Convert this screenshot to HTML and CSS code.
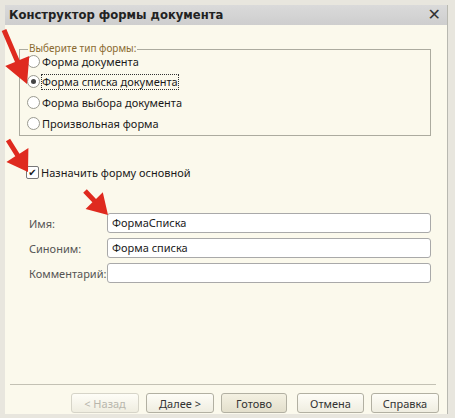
FILE: index.html
```html
<!DOCTYPE html>
<html lang="ru">
<head>
  <meta charset="UTF-8" />
  <title>Конструктор формы документа</title>
  <link rel="stylesheet" href="styles.css">
</head>
<body>
  <div class="window">
    <div class="titlebar">
      <span class="title">Конструктор формы документа</span>
      <span class="close">&#x2715;</span>
    </div>

    <div class="content">
      <fieldset class="group">
        <legend>Выберите тип формы:</legend>
        <label class="radio"><span class="dot"></span>Форма документа</label>
        <label class="radio checked"><span class="dot"></span><span class="focus">Форма списка документа</span></label>
        <label class="radio"><span class="dot"></span>Форма выбора документа</label>
        <label class="radio"><span class="dot"></span>Произвольная форма</label>
      </fieldset>

      <label class="check"><span class="box">&#x2714;</span>Назначить форму основной</label>

      <div class="fields">
        <span class="lbl">Имя:</span>
        <div class="field">ФормаСписка</div>
        <span class="lbl">Синоним:</span>
        <div class="field">Форма списка</div>
        <span class="lbl">Комментарий:</span>
        <div class="field"></div>
      </div>

      <div class="spacer"></div>

      <div class="footer">
        <div class="sep"></div>
        <div class="buttons">
          <button class="btn disabled">&lt; Назад</button>
          <button class="btn">Далее &gt;</button>
          <button class="btn default">Готово</button>
          <button class="btn gap">Отмена</button>
          <button class="btn">Справка</button>
        </div>
      </div>
    </div>

    <!-- стрелки поверх формы -->
    <svg class="arrows" width="455" height="418" viewBox="0 0 455 418">
      <g fill="#df2a1f">
        <polygon points="6.3,29 19.5,60 29.3,55.9 27,84 5.2,66.1 15,62 1.7,31" />
        <polygon points="10.1,138.7 19.5,153.7 28.4,148.1 28,172 6.4,161.9 15.3,156.3 5.9,141.3" />
        <polygon points="86.8,189.3 96,198.9 102.8,192.3 108,215 85.6,208.9 92.4,202.3 83.2,192.7" />
      </g>
    </svg>
  </div>
</body>
</html>
```

FILE: styles.css
```css
body {
  margin: 0;
  font-family: 'Noto Sans', 'Open Sans', sans-serif;
  font-size: 11px;
  line-height: 13px;
  color: #1a1a1a;
  background: #e6e4dc;
}

.window {
  position: relative;
  width: 455px;
  height: 418px;
  box-sizing: border-box;
  padding: 5px 7px 4px 5px;
  background: #e8e6de;
  display: flex;
  flex-direction: column;
}

.titlebar {
  height: 20px;
  background: linear-gradient(#dadada, #cecece);
  display: flex;
  align-items: center;
  justify-content: space-between;
  padding: 0 6px 0 4px;
  border-right: 1px solid #b8b8b0;
}

.title {
  font-family: 'DejaVu Sans', sans-serif;
  font-weight: bold;
  font-size: 11.6px;
  color: #222;
}

.close {
  font-family: 'DejaVu Sans', sans-serif;
  font-size: 16px;
  font-weight: bold;
  color: #333;
  line-height: 16px;
}

.content {
  flex: 1;
  background: #fbf9ec;
  border-right: 1px solid #b8b8b0;
  display: flex;
  flex-direction: column;
  padding: 17px 8px 1px 5px;
}

.group {
  margin: 0 8px 0 9px;
  padding: 0 6px 1px 7px;
  border: 1px solid #acab9f;
}

.group legend {
  color: #8a6a30;
  font-size: 10px;
  line-height: 12px;
  padding: 0 1px 2px;
  margin-left: 1px;
}

.radio {
  display: flex;
  align-items: center;
  height: 21px;
}

.radio:first-of-type {
  margin-top: -5px;
  height: 20px;
}

.dot {
  width: 11px;
  height: 11px;
  border: 1px solid #9a9a90;
  border-radius: 50%;
  background: #fff;
  margin-right: 2px;
  position: relative;
}

.checked .dot::after {
  content: "";
  position: absolute;
  left: 3px;
  top: 3px;
  width: 5px;
  height: 5px;
  border-radius: 50%;
  background: #444;
}

.focus {
  outline: 1px dotted #333;
  line-height: 14px;
}

.check {
  display: flex;
  align-items: center;
  margin: 30px 0 0 16px;
}

.box {
  width: 11px;
  height: 11px;
  border: 1px solid #777;
  border-radius: 2px;
  background: #fff;
  font-family: 'DejaVu Sans', sans-serif;
  font-size: 10px;
  line-height: 11px;
  text-align: center;
  margin-right: 2px;
}

.fields {
  display: grid;
  grid-template-columns: 78px 1fr;
  row-gap: 5px;
  align-items: center;
  margin: 34px 8px 0 19px;
}

.lbl {
  color: #555;
  white-space: nowrap;
}

.field {
  height: 20px;
  box-sizing: border-box;
  border: 1px solid #a9a9a9;
  border-radius: 3px;
  background: #fff;
  padding: 0 4px;
  line-height: 18px;
}

.spacer {
  flex: 1;
}

.sep {
  border-top: 1px solid #c3c1b4;
  margin-right: 3px;
}

.buttons {
  padding-top: 8px;
  display: flex;
  justify-content: flex-end;
  gap: 7px;
}

.btn {
  width: 68px;
  height: 20px;
  font-family: 'Noto Sans', 'Open Sans', sans-serif;
  font-size: 11px;
  color: #333;
  border: 1px solid #b2b0a2;
  border-radius: 3px;
  background: linear-gradient(#fefdf7, #efede0);
  padding: 0;
}

.btn.default {
  background: linear-gradient(#f4f1e2, #e3dfcc);
  width: 66px;
}

.btn.gap {
  margin-left: 3px;
  width: 67px;
}

.btn.disabled {
  color: #b8b6ac;
  border-color: #d6d4c8;
}

.arrows {
  position: absolute;
  left: 0;
  top: 0;
  pointer-events: none;
}
```
